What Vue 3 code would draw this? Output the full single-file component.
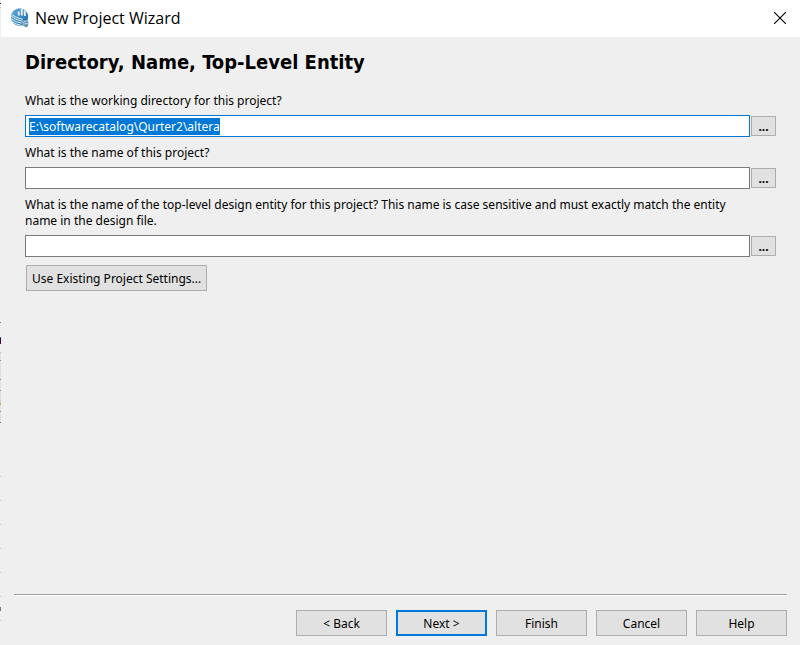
<script setup>
import { onMounted, ref } from 'vue'

const fields = ref([
  { id: 'directory', label: 'What is the working directory for this project?', value: 'E:\\softwarecatalog\\Qurter2\\altera' },
  { id: 'project', label: 'What is the name of this project?', value: '' },
  { id: 'entity', label: 'What is the name of the top-level design entity for this project? This name is case sensitive and must exactly match the entity name in the design file.', value: '' }
])
const actions = ['< Back', 'Next >', 'Finish', 'Cancel', 'Help']

// Slivers of the window behind, visible along the left edge: [y, height, colour]
const slivers = [
  [3, 1, '#222222'], [7, 1, '#c8c8c8'],
  [322, 1, '#777777'], [337, 1, '#1f5fae'], [338, 6, '#4f0038'],
  [352, 1, '#c4c4c4'], [353, 69, '#dfdfdf'], [360, 1, '#8f8f8f'],
  [379, 1, '#8f8f8f'], [390, 1, '#8f8f8f'], [399, 4, '#d8d6b8'], [403, 2, '#d9a550'],
  [411, 1, '#8f8f8f'], [422, 1, '#777777'],
  [476, 1, '#c4c4c4'], [500, 1, '#c4c4c4'], [524, 1, '#c4c4c4'], [548, 1, '#c4c4c4'],
  [572, 1, '#c4c4c4'], [596, 1, '#c4c4c4'], [607, 4, '#777777'], [620, 1, '#c4c4c4']
]

onMounted(() => {
  const input = document.getElementById('directory')
  input.focus()
  input.select()
})
</script>

<template>
  <div class="window">
    <svg class="slivers" width="1" height="645" aria-hidden="true">
      <rect v-for="s in slivers" :key="s[0]" x="0" :y="s[0]" width="1" :height="s[1]" :fill="s[2]" />
    </svg>
    <header class="titlebar">
      <svg class="logo" width="20" height="20" viewBox="0 0 20 20" aria-hidden="true">
        <defs>
          <linearGradient id="globe" x1="0" y1="0" x2="1" y2="1">
            <stop offset="0" stop-color="#6aafdc" />
            <stop offset="1" stop-color="#1768a6" />
          </linearGradient>
          <clipPath id="disc"><circle cx="9.5" cy="9" r="8.7" /></clipPath>
        </defs>
        <circle cx="9.5" cy="9" r="8.7" fill="url(#globe)" />
        <g clip-path="url(#disc)" fill="none" stroke="#e4f0f8">
          <path d="M9 7.5L8.6 3.5M12 7.5L11.6 1M15 8L14.6 2.5" stroke-width="1.9" />
          <path d="M0 4.5Q4 9.5 13 11.3M0 7.2Q5 12 12 13.2M0 10Q5 14.6 12 15.2M1 13.2Q6 16.7 11 17.2" stroke-width="1" />
        </g>
        <path d="M11.5 13L17 12L18.5 14L18 18L16 19.5L12 16.5Z" fill="#5b93b8" />
        <path d="M12 14L17 13M13 16L18 15.5" stroke="#c8dfec" stroke-width=".9" />
      </svg>
      <span class="caption">New Project Wizard</span>
      <button class="close" type="button" aria-label="Close">
        <svg width="12" height="12" viewBox="0 0 12 12"><path d="M0 0L12 12M12 0L0 12" stroke="#000" stroke-width="1.1" /></svg>
      </button>
    </header>
    <main class="page">
      <h1>Directory, Name, Top-Level Entity</h1>
      <div v-for="f in fields" :key="f.id" class="field">
        <label :for="f.id">{{ f.label }}</label>
        <div class="row">
          <input :id="f.id" v-model="f.value" type="text" spellcheck="false" />
          <button class="browse" type="button">...</button>
        </div>
      </div>
      <button class="existing" type="button">Use Existing Project Settings...</button>
    </main>
    <footer class="actions">
      <button v-for="a in actions" :key="a" type="button" :class="{ primary: a === 'Next >' }">{{ a }}</button>
    </footer>
  </div>
</template>

<style>
body {
  margin: 0;
  background: #efefef;
}
</style>

<style scoped>
.window {
  position: relative;
  box-sizing: border-box;
  min-height: 100vh;
  display: flex;
  flex-direction: column;
  background: #efefef;
  color: #000;
  font: 12px/16px "Noto Sans", "Open Sans", sans-serif;
}
.slivers {
  position: absolute;
  left: 0;
  top: 0;
}
.titlebar {
  display: flex;
  align-items: center;
  height: 37px;
  margin-left: 1px;
  padding: 0 14px 2px 9px;
  box-sizing: border-box;
  background: #fff;
}
.caption {
  flex: 1;
  margin-left: 5px;
  font: 16px/24px "Open Sans", "Noto Sans", sans-serif;
}
button {
  box-sizing: border-box;
  padding: 2px 0 0;
  border: 1px solid #adadad;
  border-radius: 0;
  background: #e1e1e1;
  color: #000;
  font: inherit;
}
.close {
  display: flex;
  padding: 0;
  border: 0;
  background: none;
}
.page {
  flex: 1;
  display: flex;
  flex-direction: column;
  align-items: stretch;
  gap: 8px;
  padding: 11px 24px 0 25px;
}
h1 {
  margin: 0 0 9px;
  font: bold 20px/28px "DejaVu Sans Condensed", "Noto Sans", sans-serif;
}
.field {
  display: flex;
  flex-direction: column;
  gap: 6px;
}
label {
  padding-right: 24px;
}
.row {
  display: flex;
  align-items: center;
  gap: 1px;
}
input {
  flex: 1;
  min-width: 0;
  box-sizing: border-box;
  height: 22px;
  padding: 0 3px;
  border: 1px solid #7a7a7a;
  border-radius: 0;
  background: #fff;
  color: #000;
  font: inherit;
  outline: none;
}
input:focus {
  border-color: #0078d7;
}
input::selection {
  background: #0078d7;
  color: #fff;
}
.browse {
  width: 25px;
  height: 20px;
  font-weight: bold;
}
.existing {
  align-self: flex-start;
  height: 26px;
  margin-left: 1px;
  padding: 2px 5px 0;
}
.actions {
  display: flex;
  justify-content: flex-end;
  gap: 9px;
  margin: 0 13px 0 14px;
  padding: 15px 0 9px;
  border-top: 1px solid #a0a0a0;
  box-shadow: inset 0 1px #fff;
}
.actions button {
  width: 91px;
  height: 26px;
}
.actions .primary {
  border: 2px solid #0078d7;
}
</style>
